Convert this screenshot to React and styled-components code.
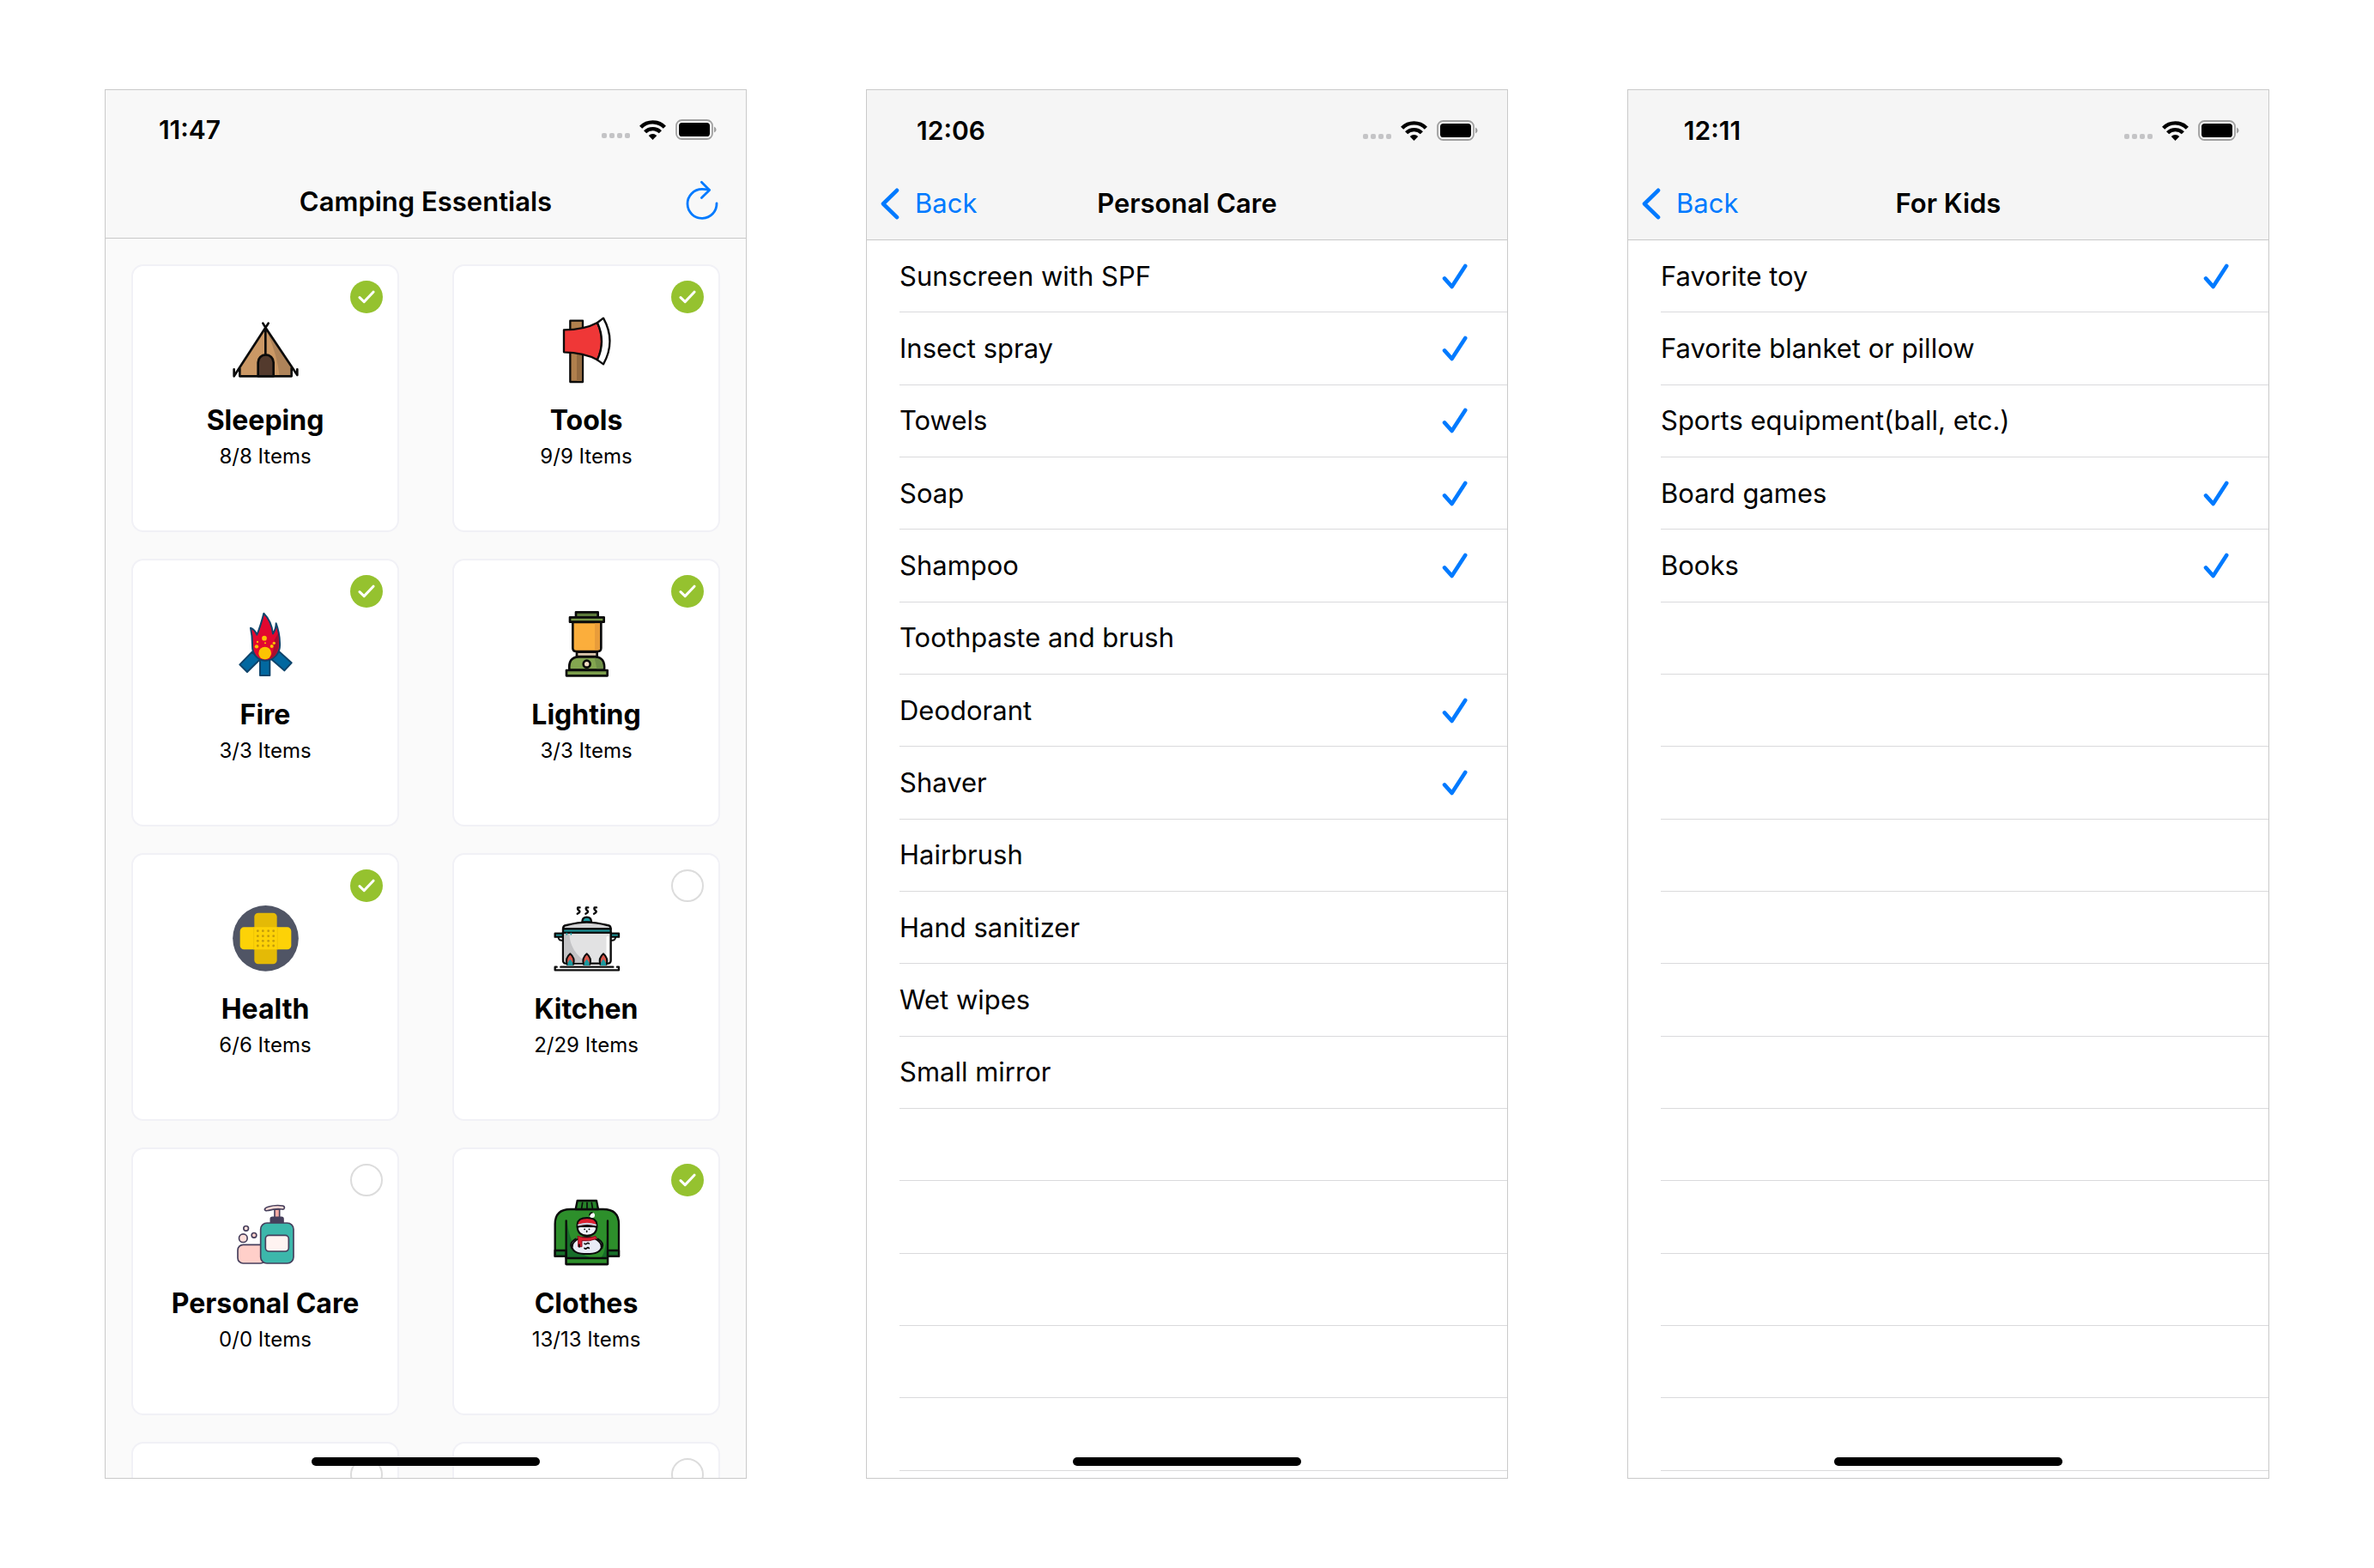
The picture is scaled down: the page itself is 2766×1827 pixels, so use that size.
import React, { useState } from "react";
import styled, { createGlobalStyle } from "styled-components";

const BLUE = "#007aff";
const INK = "#0b0b0b";

const GlobalStyle = createGlobalStyle`
  *, *::before, *::after { box-sizing: border-box; }
  body {
    margin: 0;
    background: #fff;
    color: #000;
    font-family: Inter, "Liberation Sans", sans-serif;
  }
`;

const Page = styled.main`
  display: grid;
  grid-template-columns: repeat(3, minmax(0, 1fr));
  gap: 139px;
  padding: 104px 122px;
  align-items: start;
`;

const Phone = styled.section`
  position: relative;
  display: flex;
  flex-direction: column;
  aspect-ratio: 390 / 844;
  overflow: hidden;
  border: 1px solid #cacaca;
  background: ${(p) => p.$background};
`;

const Header = styled.header`
  flex: none;
  background: ${(p) => p.$background};
  border-bottom: 1px solid #c8c8c8;
`;

const StatusBar = styled.div`
  display: flex;
  align-items: center;
  justify-content: space-between;
  height: ${(p) => (p.$tall ? 90 : 88)}px;
  padding: 4px 34px 0 28px;
`;

const Clock = styled.time`
  width: 140px;
  text-align: center;
  font-size: 30px;
  line-height: 36px;
  font-weight: 600;
`;

const StatusIcons = styled.div`
  display: flex;
  align-items: center;
  gap: 11px;
`;

const NavBar = styled.div`
  display: grid;
  grid-template-columns: 1fr auto 1fr;
  align-items: center;
  height: 84px;
  padding: 0 32px 0 16px;
`;

const NavTitle = styled.h1`
  grid-column: 2;
  margin: 0;
  padding-left: 16px;
  font-size: 31px;
  line-height: 40px;
  font-weight: 600;
`;

const NavButton = styled.button`
  display: flex;
  align-items: center;
  gap: 18px;
  justify-self: ${(p) => p.$side};
  padding: 0;
  border: 0;
  background: none;
  color: ${BLUE};
  font: inherit;
  font-size: 31px;
  line-height: 40px;
  cursor: pointer;
`;

const HomeIndicator = styled.div`
  position: absolute;
  left: 50%;
  bottom: 14px;
  width: 266px;
  height: 10px;
  margin-left: -133px;
  border-radius: 5px;
  background: #000;
`;

const CardGrid = styled.div`
  flex: 1;
  min-height: 0;
  overflow: hidden;
  display: grid;
  grid-template-columns: repeat(2, minmax(0, 1fr));
  grid-auto-rows: max-content;
  gap: 31px 62px;
  padding: 30px;
`;

const Card = styled.a`
  position: relative;
  display: flex;
  flex-direction: column;
  align-items: center;
  aspect-ratio: 1;
  padding-top: 59px;
  border: 2px solid #f1f1f6;
  border-radius: 14px;
  background: #fff;
  color: #000;
  text-decoration: none;
`;

const CardArt = styled.svg`
  width: 77px;
  height: 77px;
  overflow: visible;
`;

const CardTitle = styled.h2`
  margin: 24px 0 6px;
  font-size: 32px;
  line-height: 40px;
  font-weight: 700;
`;

const CardCount = styled.p`
  margin: 0;
  font-size: 24px;
  line-height: 32px;
`;

const Badge = styled.span`
  position: absolute;
  top: 17px;
  right: 17px;
  display: flex;
  align-items: center;
  justify-content: center;
  width: 38px;
  height: 38px;
  border-radius: 50%;
  background: ${(p) => (p.$done ? "#95c22f" : "#fff")};
  border: ${(p) => (p.$done ? "0" : "2px solid #dcdcdc")};
`;

const List = styled.ul`
  flex: 1;
  min-height: 0;
  display: grid;
  grid-template-rows: repeat(17, minmax(0, 1fr));
  margin: 0;
  padding: 0 0 8px 38px;
  list-style: none;
`;

const Row = styled.li`
  display: flex;
  border-bottom: 1px solid #dadadc;
`;

const RowLabel = styled.label`
  flex: 1;
  display: flex;
  align-items: center;
  justify-content: space-between;
  padding-right: 46px;
  font-size: 31px;
  line-height: 40px;
  cursor: pointer;
`;

const RowInput = styled.input`
  appearance: none;
  width: 0;
  height: 0;
  margin: 0;
  order: 3;
`;

const RowText = styled.span`
  flex: 1;
`;

const StatusGlyphs = () => (
  <StatusIcons>
    <svg width="33" height="30" viewBox="0 0 33 30" fill="#c4c4c6" aria-hidden="true">
      {[0, 9, 18, 27].map((x) => (
        <rect key={x} x={x} y="19" width="6" height="6" rx="2" />
      ))}
    </svg>
    <svg width="31" height="23" viewBox="0 0 31 23" fill="none" stroke="#000" strokeWidth="4.4" aria-hidden="true">
      <path d="M1.6 8.2a19.6 19.6 0 0 1 27.8 0" />
      <path d="M6.6 13.8a12.5 12.5 0 0 1 17.8 0" />
      <path d="M15.5 23l-4.8-5a6.8 6.8 0 0 1 9.6 0z" fill="#000" stroke="none" />
    </svg>
    <svg width="48" height="24" viewBox="0 0 48 24" aria-hidden="true">
      <rect x="1" y="1" width="42" height="22" rx="6.5" fill="none" stroke="#a0a0a0" strokeWidth="1.8" />
      <rect x="4" y="4" width="36" height="16" rx="3.6" fill="#000" />
      <path d="M45 8.4q2.6 1 2.6 3.6t-2.6 3.6z" fill="#a0a0a0" />
    </svg>
  </StatusIcons>
);

const ChevronIcon = () => (
  <svg width="22" height="37" viewBox="0 0 22 37" fill="none" stroke={BLUE} strokeWidth="4.6" strokeLinecap="round" strokeLinejoin="round" aria-hidden="true">
    <path d="M19 2.8L3 18.5 19 34.2" />
  </svg>
);

const RefreshIcon = () => (
  <svg width="38" height="50" viewBox="0 0 38 50" fill="none" stroke={BLUE} strokeWidth="2.8" strokeLinecap="round" strokeLinejoin="round" aria-hidden="true">
    <path d="M36 26.8A17 17 0 1 1 19 10.4q4 0 8.2.8" />
    <path d="M18.4 2.2l9.2 9.2-9.2 9.2" />
  </svg>
);

const CheckIcon = () => (
  <svg width="30" height="30" viewBox="0 0 30 30" fill="none" stroke={BLUE} strokeWidth="4.6" strokeLinecap="round" strokeLinejoin="round" aria-hidden="true">
    <path d="M3 17.4L11.6 27 27.2 3" />
  </svg>
);

const BadgeCheck = () => (
  <svg width="20" height="16" viewBox="0 0 20 16" fill="none" stroke="#fff" strokeWidth="3" strokeLinecap="round" strokeLinejoin="round" aria-hidden="true">
    <path d="M2 8.6L7.2 13.6 18 2.2" />
  </svg>
);

const TentArt = () => (
  <CardArt viewBox="92 54 231 231" fill="none" stroke={INK} strokeWidth="8" strokeLinecap="round" strokeLinejoin="round" aria-hidden="true">
    <path d="M207 92L117 232V262H298V232Z" fill="#cb9865" stroke="none" />
    <path d="M211 98L298 232V262H256Q248 190 217 118Z" fill="#ae8359" stroke="none" />
    <path d="M181 262V214a27 27 0 0 1 54 0V262Z" fill="#533a2d" />
    <path d="M207 92V186M198 77L207 92 318 258V238M217 77L207 92 97 262V238M117 234V262H298V234" />
  </CardArt>
);

const AxeArt = () => (
  <CardArt viewBox="73 54 231 231" stroke={INK} strokeWidth="7" strokeLinejoin="round" aria-hidden="true">
    <rect x="131" y="68" width="44" height="214" fill="#b0804d" />
    <path d="M154 180V279H171V180Z" fill="#936a40" stroke="none" />
    <path d="M109 100Q180 100 226 75Q256 140 226 205Q180 179 109 178Z" fill="#ef3737" />
    <path d="M226 75L247 59Q292 140 247 220L226 205Q256 140 226 75Z" fill="#fff" />
  </CardArt>
);

const FireArt = () => (
  <CardArt viewBox="92 49 231 231" stroke="#0f456c" strokeWidth="6" strokeLinejoin="round" aria-hidden="true">
    <path d="M160 192L117 236 143 262 188 218ZM254 190L298 230 273 257 228 218Z" fill="#0268a0" />
    <path d="M188 218H222V274H188Z" fill="#0268a0" />
    <path d="M201 57Q228 84 233 128Q244 112 244 92Q256 124 257 160C260 198 234 222 206 222C178 222 160 198 161 168Q161 134 155 108Q170 114 177 132Q190 100 201 57Z" fill="#e2082f" />
    <path d="M251 128Q262 208 216 218Q238 200 238 150Z" fill="#a80f2f" stroke="none" />
    <g fill="#fcc302" stroke="none">
      <circle cx="205" cy="196" r="22" />
      <circle cx="203" cy="144" r="8.5" />
      <circle cx="176" cy="173" r="6.5" />
      <circle cx="229" cy="172" r="6" />
      <circle cx="237" cy="161" r="5" />
      <circle cx="179" cy="157" r="3.5" />
      <circle cx="206" cy="161" r="3" />
    </g>
  </CardArt>
);

const LanternArt = () => (
  <CardArt viewBox="73 49 231 231" stroke={INK} strokeWidth="8" strokeLinejoin="round" aria-hidden="true">
    <path d="M151 53H228V72H151Z" fill="#5d7a3b" />
    <path d="M130 71H249V87H130Z" fill="#789848" />
    <path d="M140 88H239V178Q239 190 227 190H152Q140 190 140 178Z" fill="#fbae3c" />
    <path d="M217 92H235V184H217Z" fill="#e89c3a" stroke="none" />
    <path d="M154 192H225V208H154Z" fill="#dcc7ae" />
    <path d="M128 255Q124 210 160 209H218Q254 210 250 255Z" fill="#83a650" />
    <path d="M216 213Q246 214 246 251H224Z" fill="#6f9048" stroke="none" />
    <path d="M118 256H261V275H118Z" fill="#7b9d4b" />
    <circle cx="189" cy="234" r="12" fill="#f3dcc4" />
  </CardArt>
);

const BandageArt = () => (
  <CardArt viewBox="92 44 231 231" aria-hidden="true">
    <circle cx="207.500" cy="159" r="115" fill="#505565" />
    <rect x="168" y="70" width="79" height="179" rx="14" fill="#e4ba06" />
    <rect x="118" y="120" width="179" height="78" rx="14" fill="#fdd207" />
    <path d="M166 120V198M249 120V198" stroke="#efc406" strokeWidth="3" />
    <g fill="#c49c0c">
      {[133, 151, 168, 185].map((y) =>
        [180, 198, 217, 235].map((x) => <circle key={`${x}-${y}`} cx={x} cy={y} r="4.2" />)
      )}
    </g>
  </CardArt>
);

const PotArt = () => (
  <CardArt viewBox="73 44 231 231" stroke={INK} strokeWidth="7" strokeLinejoin="round" strokeLinecap="round" fill="none" aria-hidden="true">
    <path d="M165 51H158Q155 58 162 62T156 73M194 51H187Q184 58 191 62T185 73M223 51H216Q213 58 220 62T214 73" />
    <path d="M106 166Q90 168 90 156M273 166Q289 168 289 156" strokeWidth="6" />
    <path d="M78 142H106V154H78ZM273 142H301V154H273Z" fill="#1d9aa0" />
    <path d="M106 138H273V236Q273 247 262 247H117Q106 247 106 236Z" fill="#e2e2e3" />
    <path d="M110 142H128Q130 205 190 244H118Q110 244 110 236Z" fill="#c3c3c5" stroke="none" />
    <path d="M262 156V228" stroke="#fff" strokeWidth="9" />
    <path d="M173 102Q173 85 189 85T205 102Z" fill="#1d9aa0" />
    <path d="M106 126Q106 114 118 113Q160 103 189 103T261 113Q273 114 273 126Z" fill="#d3d3d5" />
    <path d="M106 126H273V139H106Z" fill="#1d9aa0" />
    <path d="M119 142V145M134 142V145" stroke="#1d9aa0" strokeWidth="5" />
    {[131, 189, 247].map((x) => (
      <g key={x} transform={`translate(${x} 0)`}>
        <path d="M-11 250Q-18 228 0 213Q18 228 11 250Z" fill="#d9574b" strokeWidth="6" />
        <path d="M-9 254Q-11 242 0 232Q11 242 9 254Z" fill="#1d9aa0" stroke="none" />
      </g>
    ))}
    <path d="M84 259H78V270H301V259H295M98 259H281" />
  </CardArt>
);

const SoapArt = () => (
  <CardArt viewBox="92 39 231 231" stroke="#463f5c" strokeWidth="5" strokeLinejoin="round" aria-hidden="true">
    <rect x="110" y="196" width="98" height="65" rx="19" fill="#ffcfc9" />
    <circle cx="139" cy="139" r="8.500" fill="#ffe2de" />
    <circle cx="167" cy="163" r="8.500" fill="#ffcfc9" />
    <circle cx="129" cy="173" r="14.500" fill="#ffdfdb" />
    <path d="M239 72H256V104H239Z" fill="#f7aaa2" />
    <path d="M204 72Q206 66 218 63Q242 56 268 60Q274 62 273 68Q272 73 266 72Q242 69 218 76Q206 80 204 72Z" fill="#ffdcd8" />
    <path d="M225 120V106Q225 100 231 100H263Q269 100 269 106V120Z" fill="#463f5c" />
    <rect x="190" y="120" width="115" height="141" rx="22" fill="#3cb7ab" />
    <rect x="207" y="163" width="81" height="56" rx="12" fill="#fff3f1" />
  </CardArt>
);

const SweaterArt = () => (
  <CardArt viewBox="73 39 231 231" stroke={INK} strokeWidth="7" strokeLinejoin="round" strokeLinecap="round" fill="none" aria-hidden="true">
    <path d="M78 236V124Q78 72 132 72H246Q301 72 301 124V236H262V264H117V236Z" fill="#2d8f2b" />
    <path d="M150 72L156 42H223L229 72Z" fill="#27842a" />
    <path d="M174 49L171 68M190 49V68M206 49L209 68" strokeWidth="5" />
    <path d="M120 112Q130 220 200 240H120ZM258 112Q262 210 240 240H258Z" fill="#176f2a" stroke="none" />
    <path d="M78 216H117V236H78ZM262 216H301V236H262Z" fill="#176f2a" />
    <path d="M117 243H262V264H117Z" fill="#2d8f2b" />
    <path d="M117 112V243M262 112V243" />
    <path d="M150 176Q126 190 136 208L146 204M228 176Q252 190 242 208L232 204" fill="#cfd3e3" strokeWidth="6" />
    <path d="M189 169C218 169 242 186 240 206C236 224 214 228 189 228S142 224 138 206C136 186 160 169 189 169Z" fill="#e8ebf6" strokeWidth="6" />
    <path d="M156 132Q156 164 190 164T224 132Z" fill="#eff1fa" strokeWidth="6" />
    <path d="M156 124Q158 102 190 102T224 124V134Q190 124 156 134Z" fill="#dc1f30" strokeWidth="6" />
    <path d="M160 127Q190 117 220 127" stroke="#c8d3e2" strokeWidth="6" />
    <circle cx="208" cy="93" r="9" fill="#fff" stroke="none" />
    <path d="M199 92Q201 84 208 84" strokeWidth="5" />
    <path d="M158 166Q190 178 220 166L224 175Q196 186 172 182V203H159V182Z" fill="#dc1f30" stroke="#8b1222" strokeWidth="3" />
    <path d="M181 142h1M197 142h1M189 148v3M181 192Q185 196 189 192T197 192M181 208Q185 212 189 208T197 208" strokeWidth="5" />
    <path d="M163 195v9" strokeWidth="5" />
  </CardArt>
);

const categories = [
  { name: "Sleeping", packed: 8, total: 8, done: true, Art: TentArt },
  { name: "Tools", packed: 9, total: 9, done: true, Art: AxeArt },
  { name: "Fire", packed: 3, total: 3, done: true, Art: FireArt },
  { name: "Lighting", packed: 3, total: 3, done: true, Art: LanternArt },
  { name: "Health", packed: 6, total: 6, done: true, Art: BandageArt },
  { name: "Kitchen", packed: 2, total: 29, done: false, Art: PotArt },
  { name: "Personal Care", packed: 0, total: 0, done: false, Art: SoapArt },
  { name: "Clothes", packed: 13, total: 13, done: true, Art: SweaterArt },
  { done: false },
  { done: false },
];

const personalCare = [
  ["Sunscreen with SPF", true],
  ["Insect spray", true],
  ["Towels", true],
  ["Soap", true],
  ["Shampoo", true],
  ["Toothpaste and brush", false],
  ["Deodorant", true],
  ["Shaver", true],
  ["Hairbrush", false],
  ["Hand sanitizer", false],
  ["Wet wipes", false],
  ["Small mirror", false],
];

const forKids = [
  ["Favorite toy", true],
  ["Favorite blanket or pillow", false],
  ["Sports equipment(ball, etc.)", false],
  ["Board games", true],
  ["Books", true],
];

const VISIBLE_ROWS = 17;

const CategoryCard = ({ name, packed, total, done, Art }) => (
  <Card href="#">
    <Badge $done={done}>{done && <BadgeCheck />}</Badge>
    {Art && <Art />}
    {name && <CardTitle>{name}</CardTitle>}
    {name && <CardCount>{`${packed}/${total} Items`}</CardCount>}
  </Card>
);

const HomeScreen = () => (
  <Phone $background="#fafafa">
    <Header $background="#f8f8f8">
      <StatusBar>
        <Clock>11:47</Clock>
        <StatusGlyphs />
      </StatusBar>
      <NavBar>
        <NavTitle>Camping Essentials</NavTitle>
        <NavButton type="button" $side="end" aria-label="Reset">
          <RefreshIcon />
        </NavButton>
      </NavBar>
    </Header>
    <CardGrid>
      {categories.map((category, i) => (
        <CategoryCard key={i} {...category} />
      ))}
    </CardGrid>
    <HomeIndicator />
  </Phone>
);

const ChecklistScreen = ({ time, title, items }) => {
  const [checked, setChecked] = useState(items.map(([, on]) => on));
  const toggle = (index) => setChecked(checked.map((on, i) => (i === index ? !on : on)));
  return (
    <Phone $background="#fff">
      <Header $background="#f5f5f5">
        <StatusBar $tall>
          <Clock>{time}</Clock>
          <StatusGlyphs />
        </StatusBar>
        <NavBar>
          <NavButton type="button" $side="start">
            <ChevronIcon />
            Back
          </NavButton>
          <NavTitle>{title}</NavTitle>
        </NavBar>
      </Header>
      <List>
        {Array.from({ length: VISIBLE_ROWS }, (_, i) => (
          <Row key={i}>
            {items[i] && (
              <RowLabel>
                <RowText>{items[i][0]}</RowText>
                <RowInput type="checkbox" checked={checked[i]} onChange={() => toggle(i)} />
                {checked[i] && <CheckIcon />}
              </RowLabel>
            )}
          </Row>
        ))}
      </List>
      <HomeIndicator />
    </Phone>
  );
};

export default function App() {
  return (
    <>
      <GlobalStyle />
      <Page>
        <HomeScreen />
        <ChecklistScreen time="12:06" title="Personal Care" items={personalCare} />
        <ChecklistScreen time="12:11" title="For Kids" items={forKids} />
      </Page>
    </>
  );
}
